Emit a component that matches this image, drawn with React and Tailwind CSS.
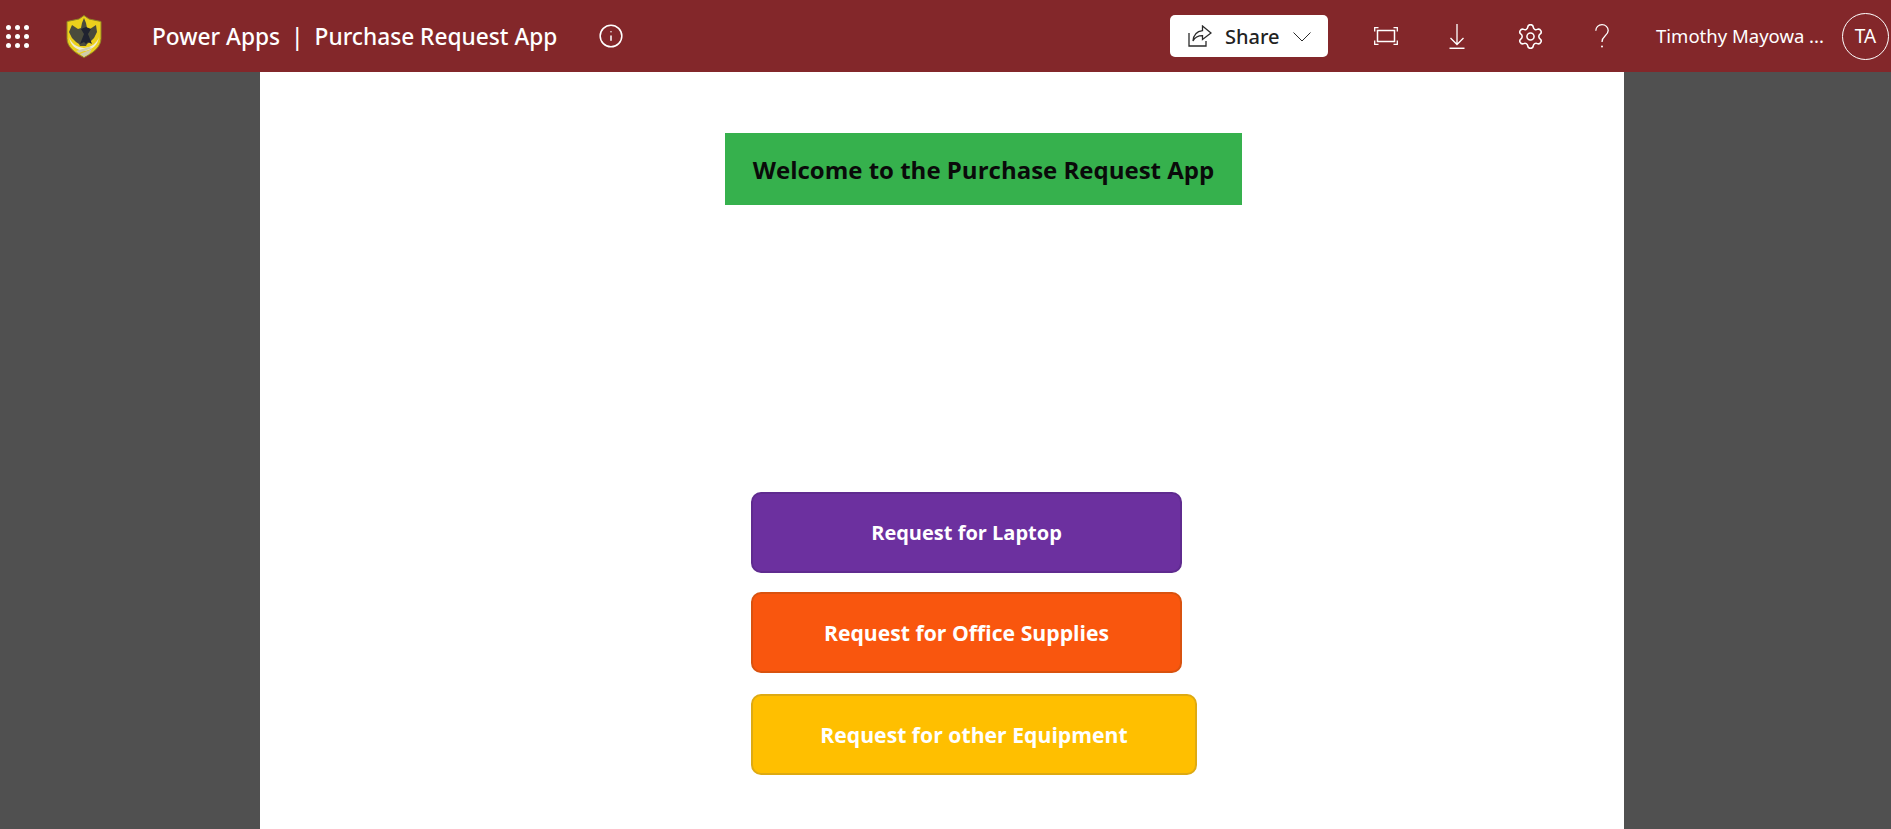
import React from "react";
import { Settings, Info } from "lucide-react";

const Waffle = () => (
  <div className="grid grid-cols-3 gap-[4px]">
    {[...Array(9)].map((_, i) => (
      <span key={i} className="h-[5px] w-[5px] rounded-full bg-white" />
    ))}
  </div>
);

const Crest = () => (
  <svg width="36" height="43" viewBox="0 0 36 43" className="block">
    <path d="M18 0.500l5 3.500 12 2.500v17c0 8-7 14-17 19C8 37.500 1 31.500 1 23.500v-17L13 4z" fill="#ecd01c" stroke="#8f8426" strokeWidth="1" />
    <path d="M6 10l6 4 3-1 1-5 2-5 2 5 1 5 3 1 6-4 1 7-3 6-4 4-3 2-1 2h-6l-1-2-3-2-4-4-3-6z" fill="#4a4b3c" />
    <path d="M18 7l2 5 5 2-3 5 2 5 2 5-4-2-2 2-2-2-4 2 2-5 2-5-3-5 5-2z" fill="#1f2330" />
    <path d="M3 22c2 6 7 10 15 11 8-1 13-5 15-11-1 8-7 13-15 14C10 35 4 30 3 22z" fill="#eeecd4" />
    <path d="M10 36l13-4 3 1-13 5zM14 39l12-5-3 5-5 3z" fill="#cfccac" />
  </svg>
);

const ShareIcon = () => (
  <svg width="24" height="22" viewBox="0 0 24 22" fill="none" stroke="#2b2b2b" strokeWidth="1.300" className="block">
    <path d="M1 8v13h17v-5" />
    <path d="M14.500 1l8.500 7-8.500 6.500v-3.800c-4 0-7.500 1.300-9.500 5.300 0.500-5.800 4-9.800 9.500-10.400z" />
  </svg>
);

const Chevron = () => (
  <svg width="18" height="10" viewBox="0 0 18 10" fill="none" stroke="#2b2b2b" strokeWidth="1" className="block">
    <path d="M0.500 0.500L9 9l8.500-8.500" />
  </svg>
);

const FitIcon = () => (
  <svg width="24" height="18" viewBox="0 0 24 18" fill="none" stroke="#fff" className="block">
    <rect x="3.500" y="3.500" width="17" height="11" strokeWidth="1.500" />
    <path d="M0.700 4.500V0.700h3.800M19.500 0.700h3.800v3.800M0.700 13.500v3.800h3.800M19.500 17.300h3.800v-3.800" strokeWidth="1.300" />
  </svg>
);

const DownloadIcon = () => (
  <svg width="16" height="25" viewBox="0 0 16 25" fill="none" stroke="#fff" strokeWidth="1.300" className="block">
    <path d="M8 0v20.500M1.500 14L8 20.500 14.500 14" />
    <path d="M0.500 24.300h15" strokeWidth="1.500" />
  </svg>
);

const HelpIcon = () => (
  <svg width="14" height="24" viewBox="0 0 14 24" fill="none" stroke="#fff" strokeWidth="1.300" className="block">
    <path d="M0.800 6.800C0.800 3.200 3.500 0.700 7 0.700s6.200 2.500 6.200 5.800c0 2.600-1.400 3.900-3.200 5.500-1.900 1.700-3 3-3 6" />
    <circle cx="7" cy="22.600" r="1" fill="#fff" stroke="none" />
  </svg>
);

const ActionButton = ({ label, className }) => (
  <button className={`flex h-[81px] items-center justify-center rounded-[10px] border-2 font-bold text-white ${className}`}>
    {label}
  </button>
);

const App = () => {
  return (
    <div className="flex h-[829px] flex-col overflow-hidden bg-[#505050] font-['Open_Sans',sans-serif]">
      {/* top bar */}
      <header className="flex h-[72px] shrink-0 items-center bg-[#83272a] pl-[6px] text-white">
        <Waffle />
        <div className="ml-[37px]">
          <Crest />
        </div>
        <div className="ml-[50px] flex items-center pt-[3px] font-['Noto_Sans',sans-serif] text-[22.7px] font-medium">
          <span>Power Apps</span>
          <span className="mx-[11px]">|</span>
          <span>Purchase Request App</span>
        </div>
        <Info size={26} strokeWidth={1.4} className="ml-[41px]" />

        <div className="ml-auto flex items-center pr-[2px]">
          <button className="flex h-[42px] w-[158px] items-center rounded-[5px] bg-white pl-[18px] font-['Noto_Sans',sans-serif] text-[20px] font-medium text-[#222]">
            <ShareIcon />
            <span className="ml-[13px] pt-[2px]">Share</span>
            <span className="ml-[13px] pt-[1px]">
              <Chevron />
            </span>
          </button>
          <div className="ml-[46px]">
            <FitIcon />
          </div>
          <div className="ml-[51px]">
            <DownloadIcon />
          </div>
          <Settings size={25} strokeWidth={1.3} viewBox="1.500 1.500 21 21" className="ml-[53px]" />
          <div className="ml-[52px]">
            <HelpIcon />
          </div>
          <span className="ml-[47px] font-['Noto_Sans',sans-serif] text-[18.5px]">Timothy Mayowa ...</span>
          <div className="ml-[18px] flex h-[47px] w-[47px] items-center justify-center rounded-full border border-white font-['Noto_Sans',sans-serif] text-[19px]">
            TA
          </div>
        </div>
      </header>

      {/* canvas */}
      <main className="flex flex-1">
        <div className="ml-[260px] flex w-[1364px] flex-col bg-white pt-[61px]">
          <div className="ml-[465px] flex h-[72px] w-[517px] items-center justify-center bg-[#36b14d] pt-[1px] text-[24px] font-bold text-[#0a0a0a]">
            Welcome to the Purchase Request App
          </div>
          <div className="ml-[491px] mt-[287px] flex w-[446px] flex-col">
            <ActionButton label="Request for Laptop" className="w-[431px] border-[#5f2b8f] bg-[#6c309f] text-[20px]" />
            <ActionButton label="Request for Office Supplies" className="mt-[19px] w-[431px] border-[#d9520f] bg-[#f9560e] text-[21.2px]" />
            <ActionButton label="Request for other Equipment" className="mt-[21px] w-[446px] border-[#deaa12] bg-[#ffbf00] text-[21.2px]" />
          </div>
        </div>
      </main>
    </div>
  );
};

export default App;
